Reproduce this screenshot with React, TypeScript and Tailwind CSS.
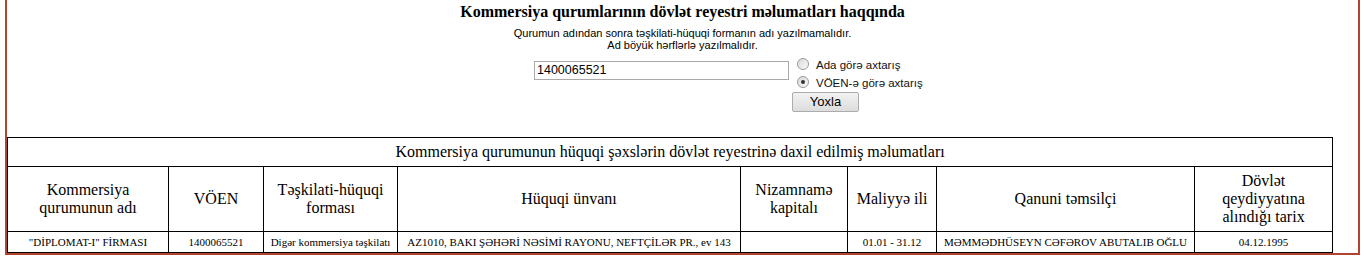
import React from "react";

const serif = { fontFamily: '"Liberation Serif", "Times New Roman", serif' };
const sans = { fontFamily: '"Liberation Sans", Arial, sans-serif' };

function Radio({ checked }: { checked?: boolean }) {
  return (
    <span className="mt-[2px] flex h-[12px] w-[12px] shrink-0 items-center justify-center rounded-full border border-[#9a9a9a] bg-gradient-to-br from-[#d8d8d8] to-[#fbfbfb]">
      {checked && <span className="h-[4px] w-[4px] rounded-full bg-[#333]" />}
    </span>
  );
}

const cols = [161, 95, 134, 343, 107, 89, 258, 138];

export default function App() {
  const headers = [
    ["Kommersiya", "qurumunun adı"],
    ["VÖEN"],
    ["Təşkilati-hüquqi", "forması"],
    ["Hüquqi ünvanı"],
    ["Nizamnamə", "kapitalı"],
    ["Maliyyə ili"],
    ["Qanuni təmsilçi"],
    ["Dövlət", "qeydiyyatına", "alındığı tarix"],
  ];
  const row = [
    '"DİPLOMAT-I" FİRMASI',
    "1400065521",
    "Digər kommersiya təşkilatı",
    "AZ1010, BAKI ŞƏHƏRİ NƏSİMİ RAYONU, NEFTÇİLƏR PR., ev 143",
    "",
    "01.01 - 31.12",
    "MƏMMƏDHÜSEYN CƏFƏROV ABUTALIB OĞLU",
    "04.12.1995",
  ];
  return (
    <div className="h-[258px] w-[1366px] bg-white">
      <div className="ml-[5px] h-[255px] w-[1355px] border-x-2 border-b-2 border-[#b3432f] bg-white">
        <div className="pt-[3px] text-center text-[16px] font-bold leading-[18px] text-black" style={serif}>
          Kommersiya qurumlarının dövlət reyestri məlumatları haqqında
        </div>
        <div className="mt-[6px] text-center text-[11px] leading-[12px] text-black" style={sans}>
          <div>Qurumun adından sonra təşkilati-hüquqi formanın adı yazılmamalıdır.</div>
          <div>Ad böyük hərflərlə yazılmalıdır.</div>
        </div>
        <div className="ml-[527px] mt-[5px] flex" style={sans}>
          <div className="mt-[5px] flex h-[19px] w-[255px] items-center border border-[#a9a9a9] bg-white px-[2px] text-[12.5px] text-black">
            1400065521
          </div>
          <div className="ml-[8px] flex flex-col">
            <div className="flex h-[18px] items-start gap-[7px] text-[11.5px] leading-[13px] text-[#111]">
              <Radio />
              <span className="mt-[3px]">Ada görə axtarış</span>
            </div>
            <div className="flex h-[18px] items-start gap-[7px] text-[11.5px] leading-[13px] text-[#111]">
              <Radio checked />
              <span className="mt-[3px]">VÖEN-ə görə axtarış</span>
            </div>
            <button className="-ml-[5px] mt-[0px] h-[20px] w-[67px] rounded-[2px] border border-[#acacac] bg-gradient-to-b from-[#f2f2f2] to-[#dddddd] text-[13px] leading-[18px] text-black">
              Yoxla
            </button>
          </div>
        </div>
        <table
          className="mt-[25px] w-[1326px] table-fixed border-collapse border border-black text-black"
          style={serif}
        >
          <colgroup>
            {cols.map((w, i) => (
              <col key={i} style={{ width: w }} />
            ))}
          </colgroup>
          <tbody>
            <tr className="h-[29px]">
              <td colSpan={8} className="border border-black text-center text-[16px] leading-[18px]">
                Kommersiya qurumunun hüquqi şəxslərin dövlət reyestrinə daxil edilmiş məlumatları
              </td>
            </tr>
            <tr className="h-[65px]">
              {headers.map((h, i) => (
                <td key={i} className="border border-black px-[2px] text-center align-middle text-[16px] leading-[18px]">
                  {h.map((l, j) => (
                    <div key={j}>{l}</div>
                  ))}
                </td>
              ))}
            </tr>
            <tr className="h-[21px]">
              {row.map((c, i) => (
                <td key={i} className="whitespace-nowrap border border-black px-[1px] text-center text-[11px] leading-[13px]">
                  {c}
                </td>
              ))}
            </tr>
          </tbody>
        </table>
      </div>
    </div>
  );
}
